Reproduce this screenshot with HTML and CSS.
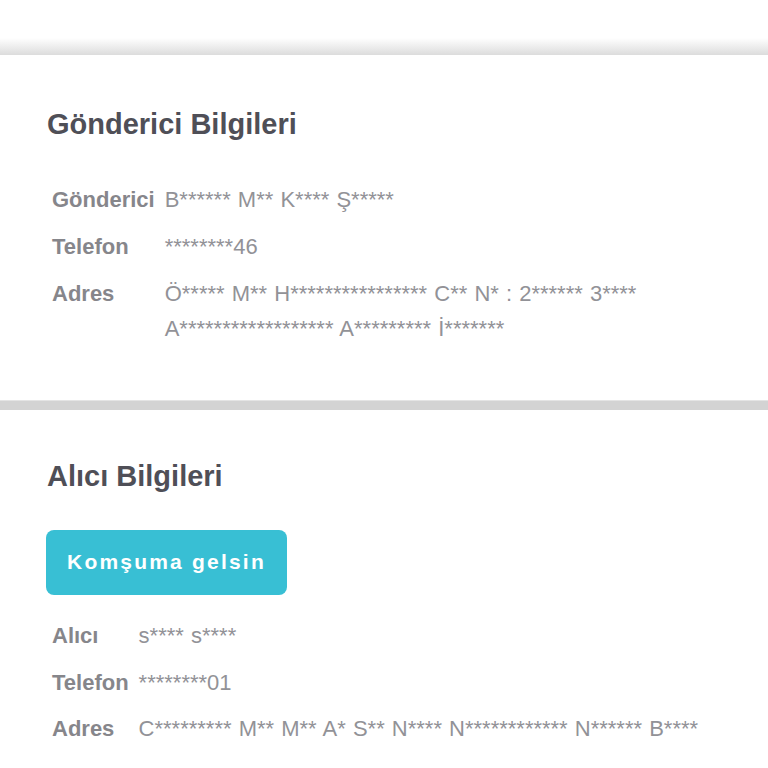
FILE: index.html
```html
<!DOCTYPE html>
<html>
<head>
    <title>Gönderi Detayı</title>
    <link rel="stylesheet" href="styles.css">
</head>
<body>
    <div class="topBar"></div>
    <div class="card senderCard">
        <h2 class="cardTitle">Gönderici Bilgileri</h2>
        <table class="infoTable">
            <tr>
                <td class="infoLabel">Gönderici</td>
                <td class="infoValue">B****** M** K**** Ş*****</td>
            </tr>
            <tr>
                <td class="infoLabel">Telefon</td>
                <td class="infoValue">********46</td>
            </tr>
            <tr>
                <td class="infoLabel">Adres</td>
                <td class="infoValue">Ö***** M** H**************** C** N* : 2****** 3**** A****************** A********* İ*******</td>
            </tr>
        </table>
    </div>
    <div class="divider"></div>
    <div class="card receiverCard">
        <h2 class="cardTitle">Alıcı Bilgileri</h2>
        <button class="neighbourButton">Komşuma gelsin</button>
        <table class="infoTable">
            <tr>
                <td class="infoLabel">Alıcı</td>
                <td class="infoValue">s**** s****</td>
            </tr>
            <tr>
                <td class="infoLabel">Telefon</td>
                <td class="infoValue">********01</td>
            </tr>
            <tr>
                <td class="infoLabel">Adres</td>
                <td class="infoValue">C********* M** M** A* S** N**** N************ N****** B****</td>
            </tr>
        </table>
    </div>
</body>
</html>
```

FILE: styles.css
```css
body {
    margin: 0;
    background-color: #fff;
    font-family: 'Liberation Sans', Arial, sans-serif;
    overflow: hidden;
}

.topBar {
    height: 55px;
    background: linear-gradient(#fff 0, #fff 38px, #dcdcdc 55px);
}

.card {
    background-color: #fff;
    padding: 0 47px;
}

.senderCard {
    padding-top: 53px;
    padding-bottom: 48px;
}

.receiverCard {
    padding-top: 50px;
    padding-bottom: 40px;
}

.divider {
    height: 9px;
    background-color: #d3d3d3;
    border-top: 1px solid #e4e4e4;
}

.cardTitle {
    margin: 0;
    font-size: 29px;
    font-weight: bold;
    color: #4f4f57;
    line-height: 1.15;
}

.infoTable {
    border-collapse: collapse;
    margin-left: 5px;
    margin-top: 35px;
}

.receiverCard .infoTable {
    margin-top: 18px;
}

.infoTable td {
    padding: 6px 0;
    font-size: 22px;
    line-height: 35px;
    vertical-align: top;
}

.receiverCard .infoTable td {
    padding: 5.75px 0;
}

.infoLabel {
    font-weight: bold;
    color: #86868b;
    padding-right: 10px !important;
    white-space: nowrap;
}

.infoValue {
    color: #929297;
    word-spacing: 1px;
}

.neighbourButton {
    display: block;
    margin: 36px 0 0 -1px;
    width: 241px;
    height: 65px;
    border: none;
    border-radius: 8px;
    background-color: #38bfd4;
    color: #fff;
    font-family: 'Liberation Sans', Arial, sans-serif;
    font-size: 21px;
    font-weight: bold;
    letter-spacing: 2.2px;
    text-align: center;
    padding: 0;
}
```
